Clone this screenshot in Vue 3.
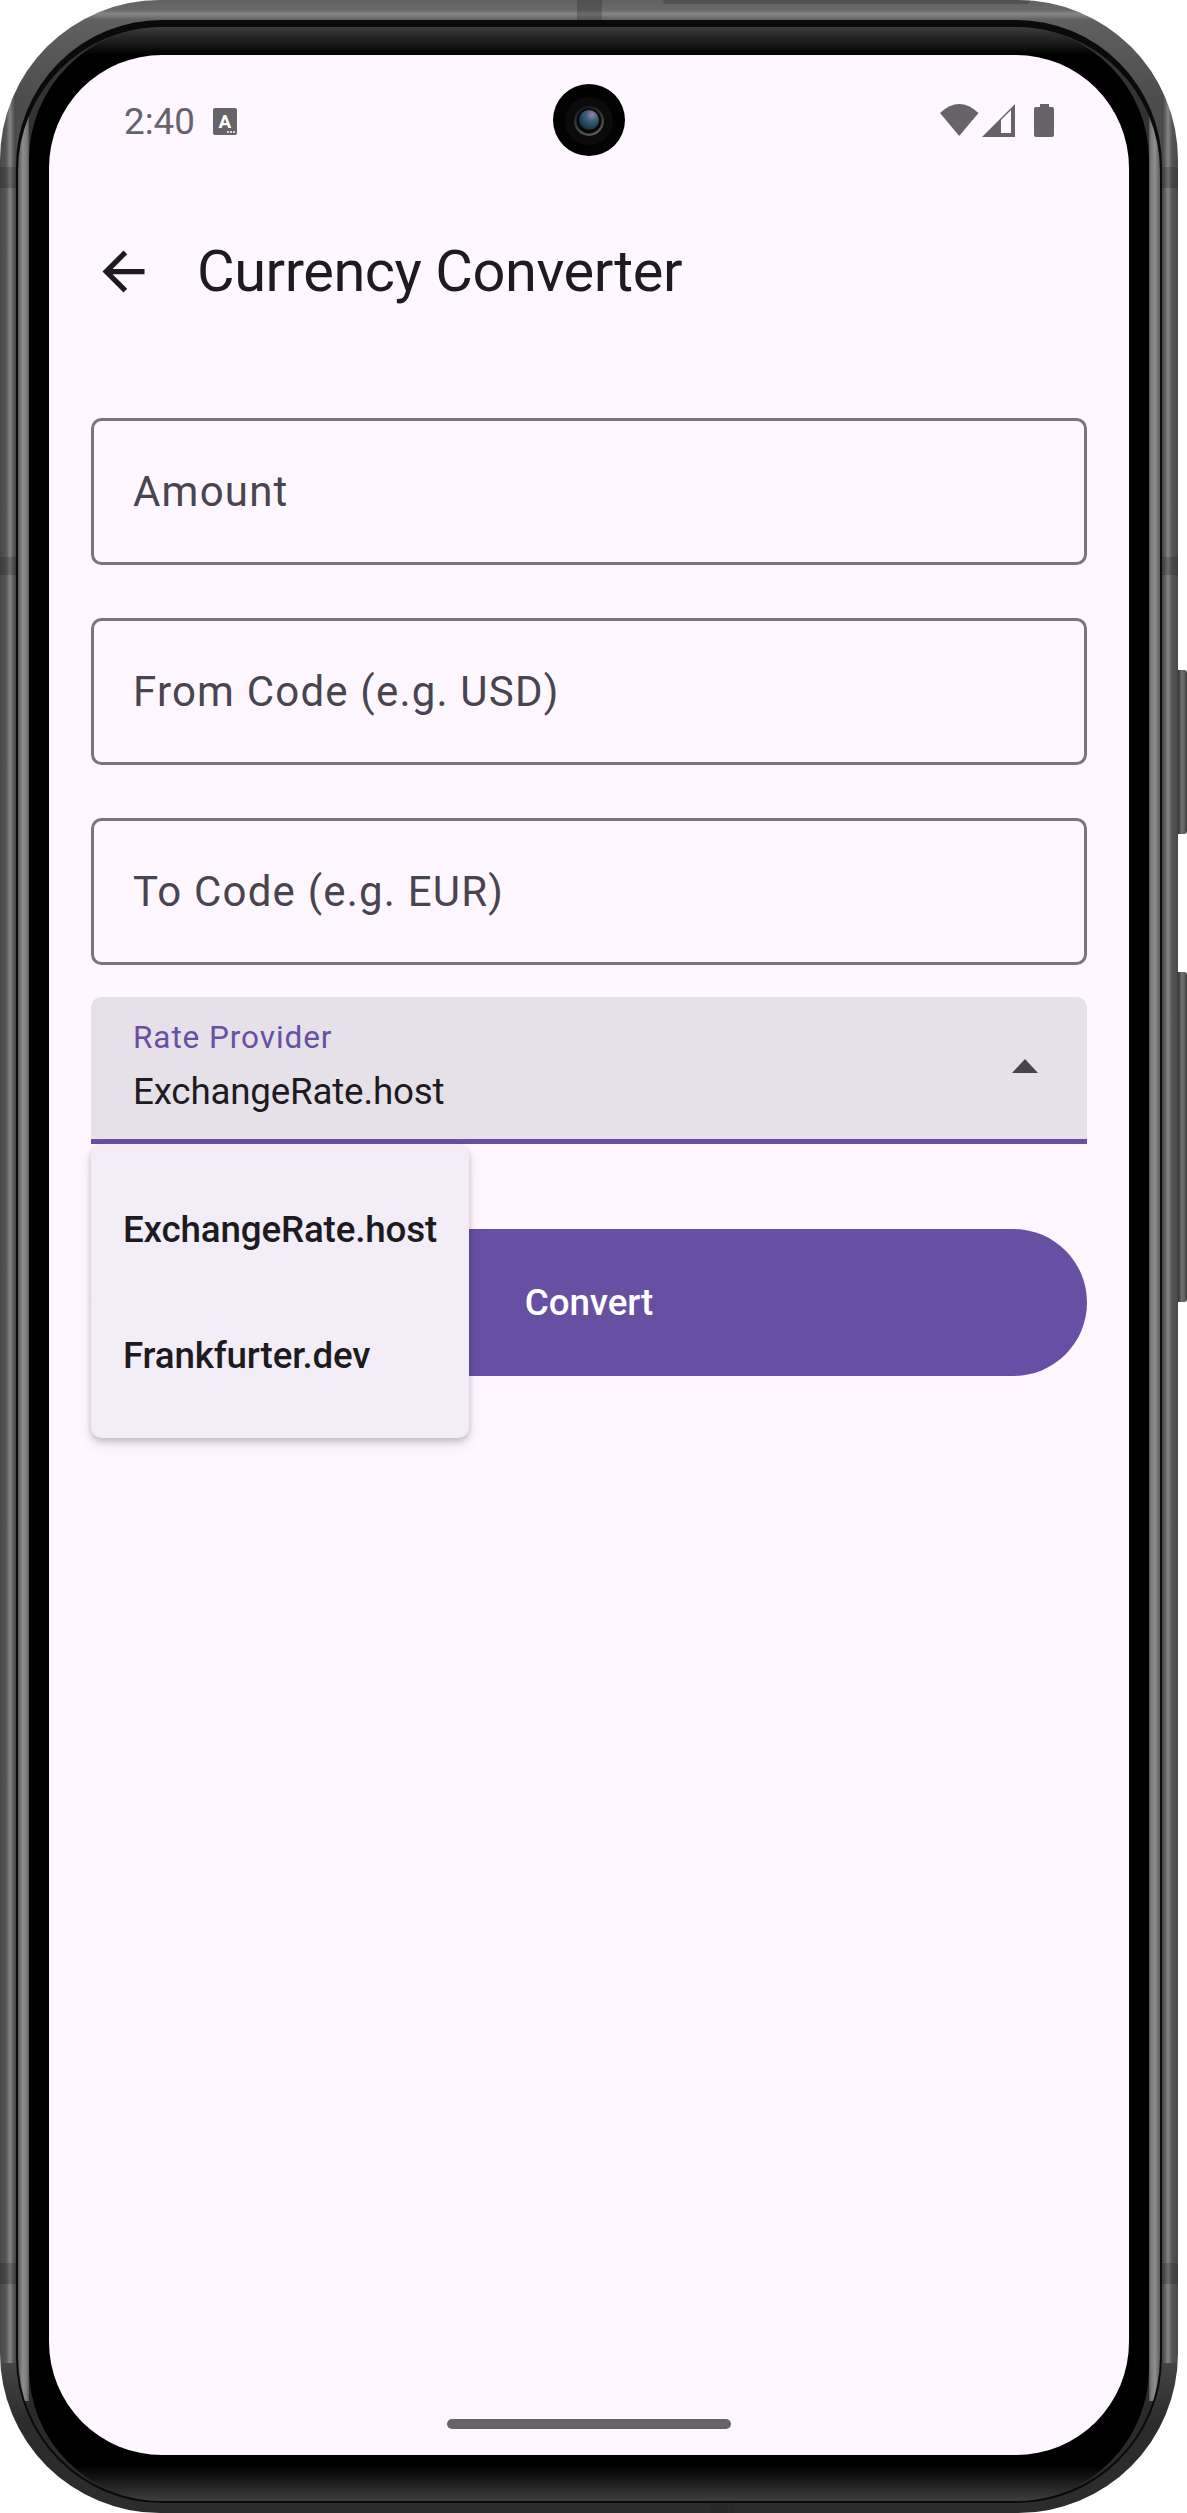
<script setup>
const fields = ['Amount', 'From Code (e.g. USD)', 'To Code (e.g. EUR)']
const providers = ['ExchangeRate.host', 'Frankfurter.dev']
</script>

<template>
  <div class="page">
    <div class="phone">
      <i class="side-key key-a"></i>
      <i class="side-key key-b"></i>
      <i class="band band-top"></i>
      <i class="band band-cap"></i>
      <i class="band band-bottom"></i>
      <i class="band band-l1"></i>
      <i class="band band-l2"></i>
      <i class="band band-l3"></i>
      <i class="band band-r1"></i>
      <i class="band band-r2"></i>
      <i class="band band-r3"></i>

      <div class="line-ring">
        <div class="mid-ring">
          <div class="bezel">
            <div class="screen">
              <svg class="camera" width="72" height="72" viewBox="0 0 72 72">
                <defs>
                  <radialGradient id="lens" cx="0.65" cy="0.25" r="0.85">
                    <stop offset="0" stop-color="#a07cb4" />
                    <stop offset="0.35" stop-color="#3c6278" />
                    <stop offset="0.8" stop-color="#1b3a4a" />
                    <stop offset="1" stop-color="#0c1a22" />
                  </radialGradient>
                  <linearGradient id="rim" x1="0.3" y1="0" x2="0.6" y2="1">
                    <stop offset="0" stop-color="#161616" />
                    <stop offset="1" stop-color="#5a5a5a" />
                  </linearGradient>
                </defs>
                <circle cx="36" cy="36" r="36" fill="#020202" />
                <circle cx="36" cy="37" r="24" fill="#0b0b0b" />
                <circle cx="36" cy="37" r="15" fill="url(#rim)" />
                <circle cx="36" cy="37" r="12.5" fill="#080808" />
                <circle cx="36" cy="36" r="10" fill="url(#lens)" />
              </svg>

              <div class="status">
                <div class="status-left">
                  <span class="time">2:40</span>
                  <svg class="notif" width="24" height="27" viewBox="0 0 24 27">
                    <rect width="24" height="27" rx="2" fill="#666369" />
                    <text x="12" y="20" text-anchor="middle" class="notif-a">A</text>
                    <circle cx="15" cy="24" r="1" fill="#fff" />
                    <circle cx="18" cy="24" r="1" fill="#fff" />
                    <circle cx="21" cy="24" r="1" fill="#fff" />
                  </svg>
                </div>
                <div class="status-right">
                  <svg width="39" height="33" viewBox="0 0 39 33">
                    <path d="M0 9Q19.2 -9 38.5 9L19.2 32Z" fill="#666369" />
                  </svg>
                  <svg class="signal" width="33" height="33" viewBox="0 0 33 33">
                    <path fill-rule="evenodd" d="M0 33L33 0V33ZM19 29H29V6L19 16Z" fill="#666369" />
                  </svg>
                  <svg class="battery" width="20" height="33" viewBox="0 0 20 33">
                    <path d="M6 0H15V3H18Q20 3 20 5V31Q20 33 18 33H2Q0 33 0 31V5Q0 3 2 3H6Z" fill="#666369" />
                  </svg>
                </div>
              </div>

              <div class="appbar">
                <svg class="back" width="63" height="63" viewBox="0 0 24 24">
                  <path d="M20 11H7.83l5.59-5.59L12 4l-8 8 8 8 1.41-1.41L7.83 13H20v-2z" fill="#1d1b20" />
                </svg>
                <span class="title">Currency Converter</span>
              </div>

              <div class="form">
                <div v-for="f in fields" :key="f" class="field">{{ f }}</div>

                <div class="select-wrap">
                  <div class="select">
                    <div class="select-text">
                      <span class="select-label">Rate Provider</span>
                      <span class="select-value">ExchangeRate.host</span>
                    </div>
                    <svg class="caret" width="26" height="14" viewBox="0 0 26 14">
                      <path d="M0 14L13 0L26 14Z" fill="#49454f" />
                    </svg>
                  </div>
                  <div class="menu">
                    <div v-for="p in providers" :key="p" class="menu-item">{{ p }}</div>
                  </div>
                </div>

                <button class="convert">Convert</button>
              </div>

              <div class="home"></div>
            </div>
          </div>
        </div>
      </div>
    </div>
  </div>
</template>

<style scoped>
.page {
  width: 1187px;
  height: 2513px;
  background: #fff;
  font-family: Roboto, "Liberation Sans", sans-serif;
}

.phone {
  position: relative;
  box-sizing: border-box;
  width: 1178px;
  height: 2513px;
  padding: 20px 16px 10px;
  border-radius: 160px;
  background:
    linear-gradient(90deg, #484848, #555 6px, #858585 10px, #5e5e5e 13px, #444 16px, transparent 16px, transparent calc(100% - 16px), #444 calc(100% - 16px), #5e5e5e calc(100% - 13px), #858585 calc(100% - 10px), #555 calc(100% - 6px), #484848) top / 100% calc(100% - 150px) no-repeat,
    linear-gradient(180deg, #606060 0, #6a6a6a 10px, #868686 14px, #606060 20px, #4c4c4c 100px, #484848 calc(100% - 160px), #2c2c2c calc(100% - 90px), #2c2c2c);
}

.side-key {
  position: absolute;
  left: 100%;
  width: 9px;
  border-radius: 0 3px 3px 0;
  background: linear-gradient(90deg, #2e2e2e, #6e6e6e 40%, #626262 70%, #3c3c3c);
}

.key-a {
  top: 670px;
  height: 164px;
}

.key-b {
  top: 972px;
  height: 330px;
}

.band {
  position: absolute;
  background: rgba(30, 30, 30, 0.25);
}

.band-top {
  top: 0;
  left: 577px;
  width: 25px;
  height: 20px;
}

.band-cap {
  top: 0;
  left: 663px;
  width: 367px;
  height: 4px;
  border-radius: 0 0 4px 4px;
}

.band-bottom {
  bottom: 0;
  left: 710px;
  width: 25px;
  height: 10px;
}

.band-l1,
.band-r1 {
  top: 167px;
  width: 16px;
  height: 21px;
}

.band-l2,
.band-r2 {
  top: 2263px;
  width: 16px;
  height: 21px;
}

.band-l3,
.band-r3 {
  top: 557px;
  width: 16px;
  height: 18px;
}

.band-l1,
.band-l2,
.band-l3 {
  left: 0;
}

.band-r1,
.band-r2,
.band-r3 {
  right: 0;
}

.line-ring {
  box-sizing: border-box;
  height: 100%;
  padding: 7px 2px 2px;
  border-radius: 146px;
  background: #0a0a0a;
}

.mid-ring {
  box-sizing: border-box;
  height: 100%;
  padding: 0 11px;
  border-radius: 144px;
  background:
    linear-gradient(90deg, #5a5a5a, #8e8e8e 5px, #7a7a7a 9px, #555 11px, transparent 11px, transparent calc(100% - 11px), #555 calc(100% - 11px), #7a7a7a calc(100% - 9px), #8e8e8e calc(100% - 5px), #5a5a5a) top / 100% calc(100% - 100px) no-repeat,
    linear-gradient(180deg, #333, #2a2a2a);
}

.bezel {
  box-sizing: border-box;
  height: 100%;
  padding: 28px 20px 46px;
  border-radius: 133px;
  background: linear-gradient(180deg, #3c3c3c 0, #000 28px, #000 calc(100% - 35px), #3e3e3e 100%);
}

.screen {
  position: relative;
  display: flex;
  flex-direction: column;
  height: 100%;
  overflow: hidden;
  border-radius: 113px;
  background: #fef7ff;
}

.camera {
  position: absolute;
  top: 29px;
  left: 504px;
}

.status {
  display: flex;
  flex: none;
  align-items: flex-start;
  justify-content: space-between;
  height: 130px;
  padding: 49px 75px 0 75px;
  box-sizing: border-box;
}

.status-left {
  display: flex;
  align-items: flex-start;
  gap: 18px;
}

.time {
  font-size: 36.75px;
  line-height: 43px;
  color: #666369;
  margin-top: -4px;
}

.notif {
  margin-top: 4px;
}

.notif-a {
  font-family: Roboto, sans-serif;
  font-size: 19px;
  font-weight: 700;
  fill: #fff;
}

.status-right {
  display: flex;
  align-items: flex-start;
}

.signal {
  margin-left: 3px;
}

.battery {
  margin-left: 19px;
}

.appbar {
  display: flex;
  flex: none;
  align-items: center;
  height: 172px;
  padding-left: 43px;
}

.title {
  margin-left: 42px;
  font-size: 57.75px;
  line-height: 70px;
  letter-spacing: -0.45px;
  color: #1d1b20;
}

.form {
  display: flex;
  flex-direction: column;
  padding: 61px 42px 0;
}

.field {
  display: flex;
  box-sizing: border-box;
  align-items: center;
  height: 147px;
  margin-bottom: 53px;
  padding-left: 39px;
  border: 3px solid #79747e;
  border-radius: 10.5px;
  font-size: 42px;
  letter-spacing: 1.2px;
  color: #49454f;
}

.select-wrap {
  position: relative;
  margin-top: -21px;
}

.select {
  display: flex;
  box-sizing: border-box;
  align-items: center;
  justify-content: space-between;
  height: 147px;
  padding: 0 49px 0 42px;
  border-bottom: 5px solid #6750a4;
  border-radius: 10.5px 10.5px 0 0;
  background: #e6e0e9;
}

.select-text {
  display: flex;
  flex-direction: column;
  margin-top: -4px;
}

.select-label {
  font-size: 31.5px;
  line-height: 42px;
  letter-spacing: 0.92px;
  color: #6750a4;
}

.select-value {
  margin-top: 10px;
  font-size: 36.75px;
  line-height: 46px;
  letter-spacing: -0.2px;
  color: #1d1b20;
}

.caret {
  margin-top: -5px;
}

.menu {
  position: absolute;
  top: 148px;
  left: 0;
  z-index: 2;
  width: 378px;
  padding: 21px 0 20px;
  border-radius: 10.5px;
  background: #f3edf7;
  box-shadow: 0 3px 6px rgba(0, 0, 0, 0.18), 0 6px 14px rgba(0, 0, 0, 0.1);
}

.menu-item {
  display: flex;
  align-items: center;
  height: 126px;
  padding-left: 32px;
  font-size: 36.75px;
  font-weight: 500;
  letter-spacing: -0.16px;
  color: #1d1b20;
}

.convert {
  height: 147px;
  margin-top: 85px;
  border: none;
  border-radius: 73.5px;
  background: #6750a4;
  font-family: inherit;
  font-size: 36.75px;
  font-weight: 500;
  letter-spacing: -0.1px;
  color: #fff;
}

.home {
  flex: none;
  width: 284px;
  height: 10px;
  margin: auto auto 26px;
  border-radius: 5px;
  background: #666369;
}
</style>

<style>
html,
body {
  background: #fff;
}
</style>
